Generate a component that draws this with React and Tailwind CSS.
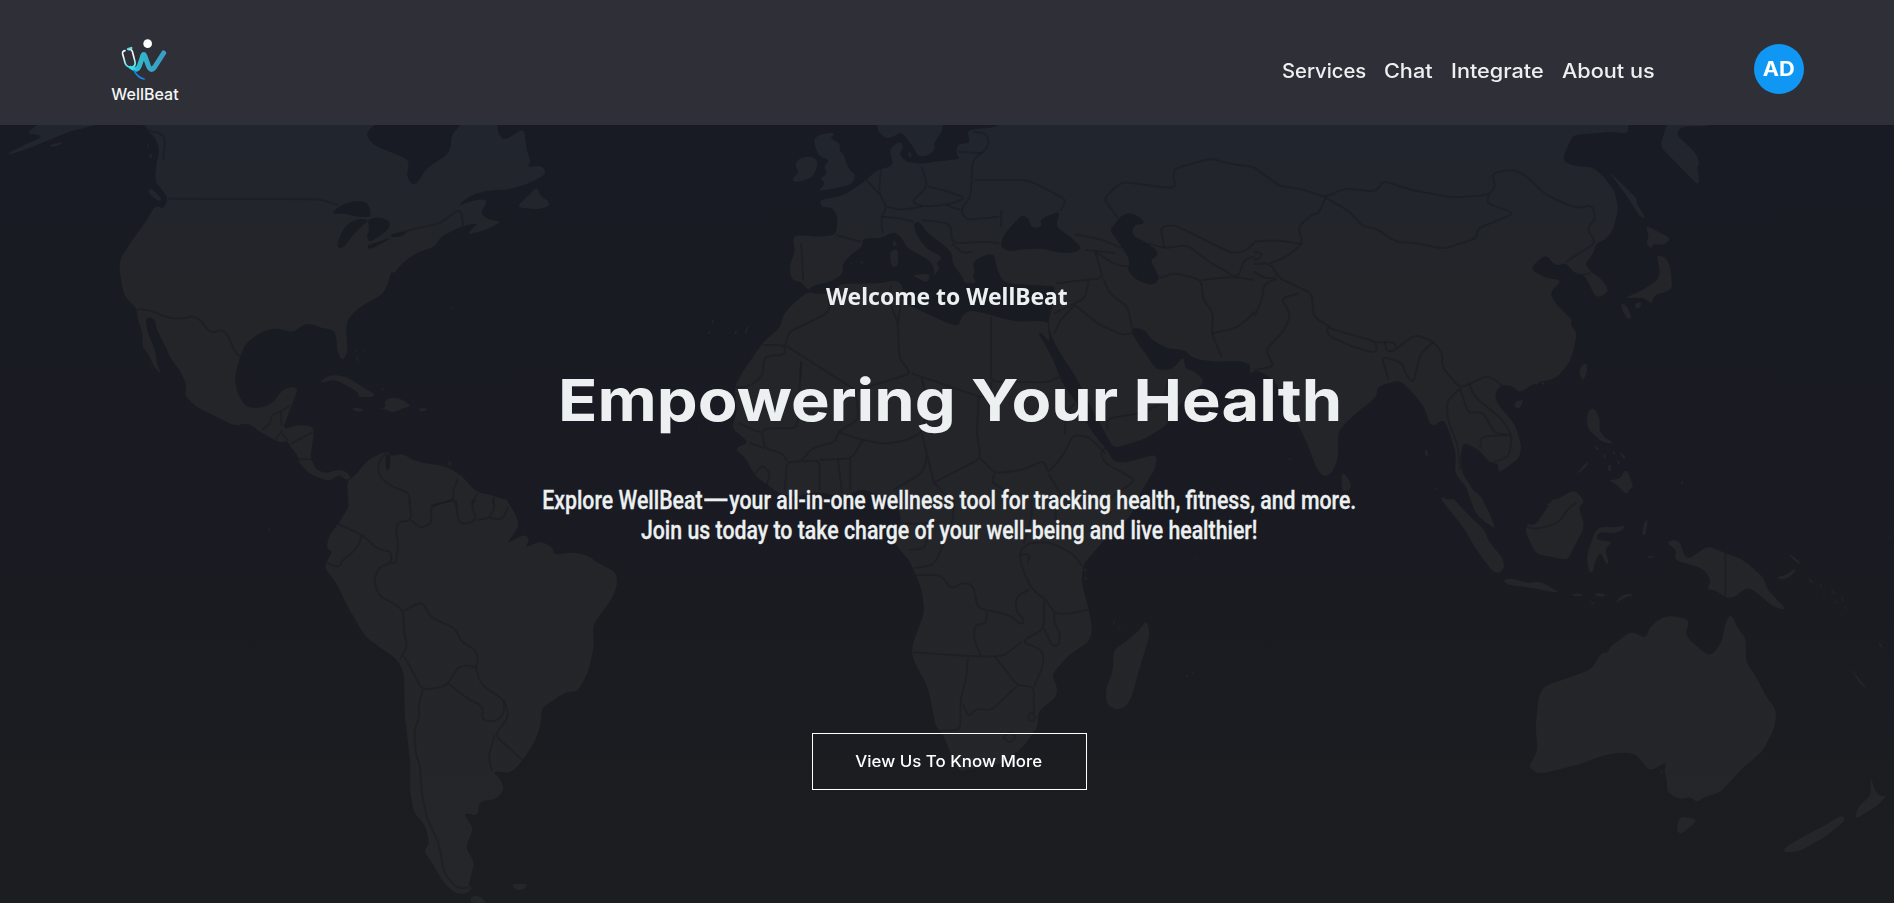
import React from "react";

// World map tiles: every tile holds closed land outlines, inner water and border lines
// on its own grid; `at` is the tile's origin on the page.
const tiles = [
  {
    at: [0, 120],
    land: [
      "348,10 360,30 378,50 388,75 390,100 384,125 382,150 380,182 396,208 412,236 400,268 388,258 376,264 360,300 330,350 298,408 292,440 298,490 305,530 335,565 338,600 350,640 348,680 366,705 376,740 396,764 384,730 380,690 362,640 356,600 366,590 380,600 384,630 402,670 418,715 440,750 458,795 452,826 480,860 575,918 608,908 640,938 672,960 690,968 704,962 712,980 730,1008 734,1030 760,1062 772,1068 808,1084 830,1062 850,1082 860,1072 845,1052 825,1050 800,1060 775,1050 770,1035 760,1016 770,930 760,918 728,915 692,930 710,870 730,805 715,800 690,812 675,840 655,858 625,866 600,858 580,815 575,770 588,712 600,672 640,635 675,624 718,638 745,612 765,612 790,625 815,628 825,650 825,690 838,722 852,700 848,640 850,600 880,562 935,525 950,495 958,455 966,460 985,430 1020,398 1065,380 1080,350 1132,318 1175,308 1148,336 1150,343 1190,330 1230,305 1196,298 1176,280 1196,240 1170,238 1120,258 1150,228 1190,212 1250,208 1300,188 1335,165 1335,145 1320,137 1292,142 1300,122 1290,90 1284,25 1235,62 1220,40 1218,10",
      "66,40 85,20 100,10 240,10 215,22 175,32 120,60 60,90 22,104 22,98 60,75 105,50 85,42",
      "120,76 150,66 155,70 128,82",
      "358,78 364,70 366,82", "364,110 370,98 374,115",
      "362,208 375,208 395,235 393,244 370,230",
      "1316,200 1322,225 1345,245 1345,258 1320,268 1265,262 1290,232",
      "780,790 800,770 825,764 855,775 880,795 922,825 905,832 875,830 880,820 855,800 820,778",
      "920,862 945,866 942,840 965,832 985,838 1008,858 985,866 962,878 945,868",
      "860,865 880,863 892,872 875,876", "1025,865 1045,865 1046,872 1030,875",
      "870,692 876,686 874,698", "872,712 876,708 880,736", "886,688 900,694 890,694",
      "935,805 945,808 938,812", "1098,1022 1108,1030 1100,1040", "1296,276 1300,276 1299,284", "1103,562 1110,562 1107,568",
      "854,1155 850,1085 875,1060 900,1020 950,992 958,1010 985,1000 1010,1020 1050,1032 1090,1038 1130,1065 1165,1115 1215,1128 1240,1145 1246,1155",
    ],
    water: [
      "925,6 905,28 897,45 915,75 1003,120 996,170 1010,194 1022,190 1045,145 1095,105 1105,80 1106,45 1130,14 1130,6",
      "810,282 835,255 870,242 898,246 908,270 908,292 870,290 845,280",
      "880,296 905,300 880,325 855,360 842,382 828,385 826,370 840,330 855,308",
      "900,296 935,292 956,305 953,325 935,345 905,368 898,350 905,330",
      "898,375 930,365 960,350 940,368 905,390", "955,345 1000,332 985,350 960,352",
      "944,1002 957,1005 955,1048 946,1054",
    ],
    lines: [
      "352,14 362,32 395,40 405,60 400,118", "412,236 785,238 830,256", "960,345 1030,322 1080,310 1115,275 1130,272 1135,318",
      "335,568 365,570 415,595 450,596 470,588 490,598 515,640 545,628 560,650 575,695 590,712",
      "712,855 688,875 665,885 662,910 642,930", "688,875 690,918", "692,930 675,960", "690,940 706,962", "712,972 768,935", "730,1018 762,1018",
      "950,992 925,1030 930,1070 960,1100 1002,1118 1004,1150", "1055,1158 1112,1140 1110,1110 1122,1075", "1118,1160 1112,1140", "1170,1120 1155,1150", "1210,1130 1208,1150",
    ],
  },
  {
    at: [0, 500],
    land: [
      "858,-2 855,20 828,72 805,110 800,145 815,155 800,185 796,205 825,250 850,315 895,410 975,480 990,520 992,650 1005,780 1005,880 1015,940 1042,975 1052,1030 1038,1055 1055,1080 1085,1145 1115,1180 1140,1182 1157,1165 1148,1155 1163,1085 1140,1045 1160,985 1140,950 1140,938 1170,948 1175,903 1215,898 1235,870 1228,840 1205,812 1250,820 1275,790 1310,725 1326,670 1326,625 1385,576 1415,574 1440,520 1455,440 1452,375 1500,295 1513,250 1508,215 1465,190 1440,165 1400,157 1357,165 1355,145 1325,122 1285,145 1298,120 1285,102 1240,133 1272,78 1262,40 1240,-2",
      "1255,1152 1290,1152 1290,1162 1275,1172 1258,1165", "1152,1192 1170,1185 1195,1209 1155,1209", "655,94 662,80 662,90",
    ],
    water: [],
    lines: [
      "828,72 888,105 925,148 960,155 958,190 930,200 915,240 930,290 960,306 988,332 990,400 998,440 980,478",
      "888,105 875,145 840,180 830,203 802,190", "958,190 970,190 976,130 970,95 975,65 1008,62 1003,0",
      "1008,62 1030,85 1058,70 1055,18 1112,0", "1118,0 1120,50 1132,75 1168,60 1155,15 1165,0", "1168,60 1200,55 1212,20 1208,0", "1200,55 1232,58 1245,20",
      "988,332 1035,305 1055,352 1115,385 1130,425 1165,450 1172,480 1165,502 1180,555 1235,600 1247,650 1212,705 1280,780",
      "990,470 1000,490 1035,570 1095,558 1120,505 1140,495 1165,502",
      "1035,570 1025,620 1028,650 1015,690 1018,760 1030,800 1032,870 1045,950 1075,1030 1088,1120 1120,1165 1150,1163",
      "1100,552 1140,592 1185,620 1180,660 1215,665 1235,640 1235,600", "1212,705 1197,770 1205,812",
    ],
  },
  {
    at: [640, 120],
    land: [
      "425,60 440,42 480,38 465,55 490,70 488,90 500,105 510,145 528,165 520,192 480,205 435,213 455,190 440,175 460,160 450,140 465,120 440,110 432,90",
      "385,120 410,108 435,118 432,150 420,175 380,188 372,178 390,155 380,140",
      "580,10 585,40 610,58 640,35 650,50 672,85 680,108 705,108 722,90 720,70 742,30 740,10",
      "1560,10 880,10 870,22 800,30 810,70 778,72 775,100 785,118 740,122 690,132 650,125 635,100 645,85 640,65 620,75 612,95 622,138 580,150 555,180 520,210 490,230 440,240 445,262 470,262 485,290 480,345 440,350 380,345 375,360 380,395 365,440 372,480 395,485 412,512 425,495 470,485 498,460 495,435 515,405 545,380 545,355 590,355 622,335 640,350 655,385 710,420 722,450 718,470 735,445 725,430 742,412 700,385 675,340 670,310 685,305 705,340 745,375 765,400 765,430 790,470 795,490 825,490 815,470 820,450 815,425 850,402 868,404 872,430 880,465 895,490 960,495 1010,498 1016,500 1012,550 1000,605 1005,640 1025,690 1070,775 1100,850 1140,940 1160,985 1240,955 1290,915 1330,840 1385,785 1360,755 1335,745 1332,708 1305,748 1275,750 1260,742 1245,712 1225,680 1205,640 1205,622 1235,628 1255,660 1290,685 1335,690 1355,715 1400,725 1475,722 1515,750 1560,760",
      "412,515 430,522 470,520 490,492 590,490 630,480 645,500 640,540 665,560 745,605 780,620 790,585 810,570 860,585 920,605 970,603 1000,605 1000,625 1004,668 985,640 975,638 1005,700 1035,790 1070,850 1090,900 1110,940 1150,1000 1160,1025 1190,1028 1265,1002 1265,1040 1235,1100 1210,1155 640,1155 620,1150 590,1130 560,1112 540,1108 500,1130 430,1115 380,1130 340,1120 280,1065 260,1015 230,985 268,968 225,925 238,870 232,820 235,790 260,740 300,670 345,620 350,585 380,545",
      "612,395 632,385 632,440 615,440", "622,358 630,375 618,378", "670,465 712,460 705,490 672,470", "655,100 665,96 664,118", "515,432 520,426 520,436", "538,428 548,422 546,432",
      "175,600 182,602 178,612", "165,638 172,634 170,644", "212,622 218,620 216,630", "230,638 238,632 236,644", "256,638 266,612 262,640", "142,924 146,924 146,932",
    ],
    water: [
      "883,378 890,345 935,285 950,292 960,325 985,320 980,298 1030,272 1018,320 1050,345 1085,385 1060,400 1025,398 985,385 935,388 905,395 890,385",
      "1180,285 1210,278 1240,310 1210,315 1205,345 1245,370 1270,395 1265,410 1250,420 1272,470 1265,490 1245,495 1210,475 1195,450 1200,420 1175,370 1150,330 1165,310",
    ],
    lines: [
      "300,675 355,675 355,705 305,708 300,770 265,800 235,802", "355,675 365,635 410,610 465,575 462,525", "355,675 530,812", "395,725 385,925 305,925 300,940 240,910", "395,725 392,780",
      "530,812 560,800 665,760 635,715 632,610 610,540 615,495", "632,610 640,545", "665,760 690,770 830,830", "860,590 860,785 1000,787 1028,770", "860,785 860,830 830,830", "830,830 825,940 835,1015 720,1088",
      "690,940 705,1010 690,1060 620,1110", "485,935 545,960 600,972 650,962 690,940 705,850 690,770", "530,812 535,900 485,935 480,965 420,985 395,1025 360,1025 355,1110", "395,1025 440,1020 440,1110", "485,1015 495,1120", "515,1015 515,1110", "545,960 520,1015 440,1020",
      "835,1015 870,1060 940,1050 990,1020 1000,1060 1040,1000 1060,945 1100,950 1140,1000", "1040,945 1045,880 1065,850", "1000,1060 1040,1140 1140,1145 1215,1080 1140,1030 1128,1000 1140,985", "720,1088 705,1010", "720,1088 760,1140", "870,1060 860,1085 930,1140",
      "300,940 305,985 350,1000 360,1025", "268,968 305,985", "282,1060 300,1035 320,1060 310,1095",
      "1170,292 1135,235 1180,185 1300,205 1315,195 1305,175 1310,145 1400,115 1440,130 1495,140 1504,142",
      "1285,385 1275,320 1310,315 1450,400 1480,395 1500,375 1504,368", "1245,370 1285,385 1340,375 1400,430 1465,475 1480,420 1504,410",
      "1270,475 1310,458 1375,480 1380,540 1405,580 1400,640 1425,710", "1400,640 1460,625 1495,590 1504,575", "1375,480 1450,470 1504,480",
      "1065,343 1135,360 1180,385", "1090,390 1135,395 1165,400", "1115,395 1165,435 1200,440", "1020,490 1090,480 1135,475 1115,395", "1135,475 1150,520 1195,560 1205,622", "1100,480 1090,535 1015,580", "1065,555 1120,610 1180,645 1205,640", "1015,640 1030,600 1065,555", "1145,930 1145,895 1225,880 1280,850 1295,780",
      "590,150 585,220 605,260 590,300 595,340", "690,140 705,200 665,245 690,260 750,255 800,235 745,210 705,200", "555,180 585,220", "605,260 640,270 690,260", "590,290 640,295 670,305", "815,35 850,40 855,80 815,120 810,230 785,270 800,300 880,290", "780,95 840,100", "820,180 950,180 1000,210 1045,240 1030,272", "885,270 885,320", "690,300 760,310 765,370 850,365 880,370", "750,255 785,270", "480,345 540,365", "395,370 400,480", "765,370 790,400 815,395",
    ],
  },
  {
    at: [640, 500],
    land: [
      "640,-2 632,25 640,50 625,135 660,180 690,265 697,335 665,445 670,480 705,560 725,680 742,700 770,790 785,815 820,800 880,795 935,745 975,680 975,635 1020,590 1022,560 1008,525 1050,465 1100,425 1108,390 1100,330 1082,250 1085,195 1130,130 1200,50 1222,-2",
      "1240,360 1250,400 1225,500 1205,590 1190,620 1165,630 1142,610 1142,560 1158,520 1160,450 1190,425 1225,390",
      "1088,205 1095,208 1090,216", "1088,230 1096,236 1092,242", "1158,362 1164,366 1160,374", "1172,384 1180,388 1174,390", "1355,170 1372,182 1360,176", "1336,526 1344,524 1340,532", "1352,518 1358,516 1356,524",
    ],
    water: [],
    lines: [
      "640,70 690,72 735,65", "705,75 700,145 660,150", "672,205 720,195 745,130 765,70 770,0", "675,225 738,225 762,268 790,248 815,255 828,325 905,345 935,375 942,362 920,330 922,290 955,268",
      "935,200 960,268 995,300", "955,130 1000,125 1060,160 1085,200", "955,130 930,150 935,200", "930,165 955,160 950,190", "995,300 1015,340 1050,342 1100,328", "990,300 990,385 935,425 985,450 990,490 965,560",
      "1015,340 1015,370 1030,400 1025,440 1008,435 990,385", "668,457 800,468 865,470 895,465 935,425", "850,335 848,370 820,375 818,420 835,465", "870,470 925,557 965,560 965,640", "925,557 860,632 825,625 805,652 790,610", "803,475 800,530 785,600 785,690 735,692",
      "890,712 905,695 922,712 905,730 890,712", "950,650 960,635 970,655 955,665 950,650", "960,0 960,50 940,130", "1020,0 1018,60",
    ],
  },
  {
    at: [1254, 120],
    land: [
      "-10,760 10,750 50,780 105,905 130,970 155,1050 172,1070 190,1060 205,1020 207,930 250,880 300,830 302,800 355,780 375,800 405,840 420,870 430,910 440,918 465,897 480,940 495,1000 492,1060 525,1110 545,1125 510,1060 505,1020 512,965 552,990 580,1030 598,1030 598,1060 650,1015 655,975 640,915 595,850 590,820 605,795 635,797 650,820 685,790 740,775 775,725 792,640 775,615 780,600 745,560 723,520 755,480 715,475 675,445 715,402 738,438 765,428 785,460 810,465 838,535 870,515 855,480 825,455 810,430 830,405 838,370 862,358 880,330 892,270 885,215 850,160 825,140 780,138 755,120 780,45 880,35 915,42 918,10 -10,10",
      "1012,10 995,80 1085,192 1092,185 1085,140 1092,130 1080,95 1035,45 1045,20 1110,18 1110,10", "868,152 900,190 940,238 935,245 960,295 945,290 920,240",
      "958,315 1022,355 1005,375 975,372 975,388 960,370 968,350", "985,402 1010,415 1020,440 1025,510 980,525 975,553 955,532 905,535 945,515 990,480 995,450", "898,550 912,555 925,590 918,600 905,580", "933,550 950,545 945,565 935,565",
      "798,745 812,728 818,745 808,782 798,765", "640,845 662,838 650,868 638,860", "215,1055 235,1080 238,1108 215,1115", "820,870 835,865 848,900 845,930 860,955 885,970 855,968 820,930 815,900",
      "868,1080 895,1078 912,1045 930,1100 922,1105 912,1125 890,1095", "785,1068 820,1020 815,1040", "832,975 845,985 840,992", "855,1005 862,1000 860,1022", "868,1035 875,1035 874,1055 868,1052", "888,1018 898,1030 892,1034", "893,990 912,1012 905,1018", "880,990 886,1005 878,1000",
      "418,990 425,990 426,1010 420,1008", "442,1100 448,1104 444,1110", "84,1014 92,1016 88,1022", "1045,1088 1052,1082 1050,1094", "688,790 698,786 694,796", "702,788 712,786 708,796",
      "455,1128 475,1138 490,1152 470,1152", "518,1098 548,1118 568,1152 535,1152", "785,1108 808,1140 803,1155 715,1155 740,1140",
    ],
    water: [],
    lines: [
      "0,142 65,200 110,205 175,232 220,205 300,215 315,182 385,210 490,233 575,225 592,200 582,160 630,148 665,165 715,225 790,265 828,255 838,295 815,325 838,368 765,425",
      "175,232 235,275 265,318 300,325 345,365 400,370 465,387 545,355 548,325 630,285 630,275 570,250 575,225", "175,232 160,280 140,285 107,322 120,370 80,410 40,430", "0,365 50,360 118,372", "0,395 20,400 15,415 0,420", "0,432 40,430 62,475 142,520 145,590 185,620",
      "180,622 240,645 300,665 300,700 240,680 180,645 180,622", "320,665 345,668 350,690 325,695 320,665", "300,665 320,668", "350,685 395,643 440,665 462,700 460,740 505,805 575,765 608,797", "440,665 408,700 390,790 370,760 365,730 312,708 330,780",
      "505,805 472,845 475,900 500,980 505,1050", "505,805 525,880 560,875 590,940 630,945", "525,785 540,830 610,900 632,950 625,1010 580,1030", "555,985 555,950 620,945", "0,455 25,475 62,475 25,490 20,540 0,590", "110,520 65,535 90,580 75,630 28,690 50,740 0,750", "800,465 825,460",
    ],
  },
  {
    at: [1254, 500],
    land: [
      "458,-2 490,-2 530,50 565,90 575,125 610,175 613,205 600,220 585,215 545,150 515,85", "530,-2 558,-2 575,35 592,85 580,78 545,45",
      "806,-2 808,5 795,20 810,80 770,175 760,178 690,162 665,95 668,72 690,75 732,-2",
      "835,95 850,80 885,82 908,75 905,90 880,100 845,95 838,120 880,125 860,145 870,195 862,190 848,155 835,185 830,218 820,215 815,170", "610,240 635,235 665,250 700,243 752,280 700,268 665,260 625,256",
      "780,282 800,280 805,288 782,288", "835,280 862,282 858,290 838,288", "822,304 835,308 830,312", "882,312 905,282 935,282 905,295", "955,70 965,55 960,105 950,105", "960,168 985,170 970,176",
      "1010,128 1030,118 1045,130 1055,170 1068,175 1112,137 1155,160 1200,180 1250,235 1255,265 1305,330 1270,320 1240,285 1210,260 1175,293 1155,292 1130,270 1110,268 1120,240 1100,205 1030,180 1035,150",
      "1280,232 1305,225 1328,203 1320,225 1295,240", "1305,160 1325,172 1340,192 1332,190", "1355,228 1372,250 1364,248", "1382,248 1394,260 1388,260", "1392,275 1402,290 1396,286", "1412,265 1426,284 1418,280", "1422,302 1434,312 1426,310", "1440,288 1446,305 1440,302", "1445,316 1454,330 1448,326",
      "1030,347 1068,362 1055,405 1085,440 1118,470 1145,430 1155,370 1168,340 1185,385 1205,415 1205,485 1230,530 1255,590 1280,630 1275,685 1245,755 1200,800 1140,880 1105,888 1085,908 1070,890 1045,898 1012,878 1012,835 1005,815 1010,785 970,815 935,760 895,757 850,768 800,792 700,822 672,803 695,755 690,680 697,590 712,558 825,510 850,460 868,458 872,440 925,393 960,417 970,380 1000,352",
      "1042,948 1088,958 1065,985 1045,1002 1035,992", "1510,825 1520,870 1535,890 1550,885 1530,915 1470,960 1482,915 1512,888", "1440,945 1450,960 1400,1010 1335,1055 1300,1058 1298,1045 1345,1010 1400,975", "1462,500 1475,525 1505,570 1480,545", "1530,420 1542,447 1534,440", "992,825 1002,808 1000,820", "1555,112 1562,114 1558,118",
    ],
    water: [],
    lines: ["1155,155 1155,295", "668,80 690,88 745,70 770,25 790,8"],
  },
];

const parse = (s) => s.split(" ").map((p) => p.split(",").map(Number));

// Joins the points with softly rounded corners; the rounding is capped on long edges.
function outline(s, closed) {
  const pts = parse(s);
  const n = pts.length;
  const toward = (a, b) => {
    const len = Math.hypot(b[0] - a[0], b[1] - a[1]) || 1;
    const t = Math.min(0.4, 18 / len);
    return [a[0] + (b[0] - a[0]) * t, a[1] + (b[1] - a[1]) * t].map((v) => v.toFixed(1)).join(" ");
  };
  const corner = (i) => {
    const p = pts[i];
    // Corners on a tile's cut edge stay sharp.
    if (closed && (p[0] === -10 || p[0] === 1560 || p[1] === -2 || p[1] === 10 || p[1] === 1155)) {
      return `L${p.join(" ")}`;
    }
    return `L${toward(p, pts[(i + n - 1) % n])}Q${p.join(" ")} ${toward(p, pts[(i + 1) % n])}`;
  };
  const d = [];
  if (closed) {
    for (let i = 0; i < n; i++) d.push(corner(i));
    return d.join("").replace("L", "M") + "Z";
  }
  d.push(`M${pts[0].join(" ")}`);
  for (let i = 1; i < n - 1; i++) d.push(corner(i));
  d.push(`L${pts[n - 1].join(" ")}`);
  return d.join("");
}

function WorldMap() {
  return (
    <svg className="absolute inset-0 h-full w-full" viewBox="0 125 1894 778" preserveAspectRatio="none" aria-hidden="true">
      <defs>
        <linearGradient id="landTone" x1="0" y1="0" x2="0" y2="1">
          <stop offset="0" stopColor="#21252d" />
          <stop offset="0.2" stopColor="#232529" />
          <stop offset="0.5" stopColor="#242529" />
          <stop offset="1" stopColor="#25262a" />
        </linearGradient>
        <mask id="landMask" maskUnits="userSpaceOnUse" x="0" y="125" width="1894" height="778">
          {tiles.map((t) => (
            <g key={t.at.join()} transform={`translate(${t.at[0]} ${t.at[1]}) scale(0.40816 0.33333)`}>
              {t.land.map((s) => <path key={s} d={outline(s, true)} fill="#fff" />)}
              {t.water.map((s) => <path key={s} d={outline(s, true)} fill="#000" />)}
            </g>
          ))}
          {tiles.map((t) => (
            <g key={t.at.join()} transform={`translate(${t.at[0]} ${t.at[1]}) scale(0.40816 0.33333)`}>
              {t.lines.map((s) => (
                <path key={s} d={outline(s, false)} fill="none" stroke="#000" strokeOpacity="0.6" strokeWidth="2" vectorEffect="non-scaling-stroke" />
              ))}
            </g>
          ))}
        </mask>
      </defs>
      <rect x="0" y="125" width="1894" height="778" fill="url(#landTone)" mask="url(#landMask)" />
    </svg>
  );
}

function Logo() {
  return (
    <a href="#" className="flex w-[70px] flex-col items-center">
      <svg className="h-[44px] w-[48px]" viewBox="92 50 144 132" fill="none" strokeLinecap="round" strokeLinejoin="round">
        <defs>
          <linearGradient id="wTone" x1="130" y1="0" x2="225" y2="0" gradientUnits="userSpaceOnUse">
            <stop offset="0" stopColor="#2fc4d0" />
            <stop offset="0.5" stopColor="#35a8c8" />
            <stop offset="1" stopColor="#3a9dc4" />
          </linearGradient>
          <linearGradient id="tubeTone" x1="0" y1="84" x2="0" y2="145" gradientUnits="userSpaceOnUse">
            <stop offset="0.4" stopColor="#f4fafb" />
            <stop offset="1" stopColor="#3fd8e6" />
          </linearGradient>
        </defs>
        <circle cx="172" cy="70" r="13" fill="#fff" />
        <path d="M134 146Q143 149 148 134L157 108Q160 97 164 108L174 136Q182 156 193 140L220 98" stroke="url(#wTone)" strokeWidth="15" />
        <path d="M104 91Q95 93 97 101L105 130Q110 141 124 141Q137 138 134 124L126 93Q123 86 116 88" stroke="url(#tubeTone)" strokeWidth="5" />
        <path d="M113 86L123 83" stroke="#5ce0e8" strokeWidth="7" />
        <path d="M120 141L131 147" stroke="#35e0ea" strokeWidth="9" />
        <path d="M131 150Q141 171 161 176" stroke="#1784e6" strokeWidth="5" />
      </svg>
      <span className="mt-[3px] whitespace-nowrap font-['Inter',sans-serif] text-[16px] font-medium leading-[20px] text-[#f3f4f5]">WellBeat</span>
    </a>
  );
}

const links = [
  { label: "Services", box: "w-[84px]", stretch: "scale-x-[1.037]" },
  { label: "Chat", box: "w-[48px]", stretch: "scale-x-[1.11]" },
  { label: "Integrate", box: "w-[93px]", stretch: "scale-x-[1.11]" },
  { label: "About us", box: "w-[92px]", stretch: "scale-x-[1.11]" },
];

export default function App() {
  return (
    <div className="flex h-[903px] w-full flex-col overflow-hidden bg-[#1b1c20] text-[#ecf0f1]">
      <header className="flex h-[125px] shrink-0 items-start bg-[#2f3037] pl-[110px] pr-[90px]">
        <div className="pt-[37px]"><Logo /></div>
        <nav className="ml-auto mr-[99px] flex gap-[18.5px] pt-[55px]">
          {links.map((l) => (
            <a key={l.label} href="#" className={`${l.box} whitespace-nowrap font-['Inter',sans-serif] text-[19.5px] font-medium leading-[32px]`}>
              <span className={`${l.stretch} -ml-px inline-block origin-left`}>{l.label}</span>
            </a>
          ))}
        </nav>
        <div className="mt-[44px] flex h-[50px] w-[50px] items-center justify-center rounded-full bg-[#1097f4] font-['Inter',sans-serif] text-[20px] font-bold text-white">
          <span className="scale-x-[1.09]">AD</span>
        </div>
      </header>
      <main className="relative flex flex-1 flex-col items-center bg-linear-to-b from-[#181b23] via-[#1a1b22] to-[#1c1d20]">
        <WorldMap />
        <p className="relative mt-[155px] scale-x-[0.953] whitespace-nowrap font-['Noto_Sans',sans-serif] text-[24px] font-bold leading-[32px]">Welcome to WellBeat</p>
        <h1 className="relative mt-[48px] translate-x-[3px] scale-x-[1.12] whitespace-nowrap font-['Inter',sans-serif] text-[58px] font-bold leading-[80px]">Empowering Your Health</h1>
        <p className="relative mt-[46px] translate-x-[2.5px] scale-x-[0.852] whitespace-nowrap text-center font-['Roboto',sans-serif] text-[25px] font-medium leading-[30px] [-webkit-text-stroke:0.3px]">
          Explore WellBeat<span className="mx-[6px] inline-block scale-x-[1.6]">—</span>your all-in-one wellness tool for tracking health, fitness, and more.<br />
          Join us today to take charge of your well-being and live healthier!
        </p>
        <button className="relative mt-[187px] h-[57px] w-[275px] translate-x-[2px] border border-white font-['Inter',sans-serif] text-[15.5px] font-medium text-white">
          <span className="inline-block scale-x-[1.09]">View Us To Know More</span>
        </button>
      </main>
    </div>
  );
}
